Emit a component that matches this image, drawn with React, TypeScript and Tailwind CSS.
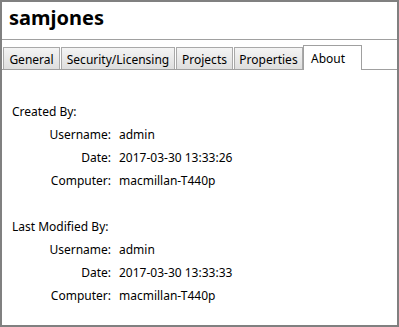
import React from "react";

const font = { fontFamily: '"Segoe UI", "Noto Sans", "Open Sans", sans-serif' };

function Row({ label, value }: { label: string; value: string }) {
  return (
    <div className="flex h-[23px] items-center">
      <div className="w-[99px] text-right">{label}</div>
      <div className="pl-[8px]">{value}</div>
    </div>
  );
}

export default function App() {
  const tabs = [
    { name: "General", w: "w-[57px]" },
    { name: "Security/Licensing", w: "w-[114px]" },
    { name: "Projects", w: "w-[57px]" },
    { name: "Properties", w: "w-[69px]" },
  ];
  return (
    <div
      className="w-[399px] h-[327px] border-2 border-[#808080] bg-white text-[12px] text-[#000] overflow-hidden"
      style={font}
    >
      <div className="h-[38px] border-b border-[#a0a0a0] flex items-center pl-[7px] pb-[6px]">
        <span className="text-[20px] font-bold leading-none">samjones</span>
      </div>
      <div className="mt-[5px] flex items-end h-[25px] border-b border-[#a0a0a0] pl-[1px]">
        {tabs.map((t) => (
          <div
            key={t.name}
            className={`${t.w} h-[22px] mr-[1px] border-t border-l border-r border-[#a9a9a9] bg-gradient-to-b from-[#f4f4f4] to-[#dedede] flex items-center justify-center leading-none pt-[3px]`}
          >
            {t.name}
          </div>
        ))}
        <div className="-ml-[1px] w-[59px] h-[25px] -mb-px border-t border-l border-r border-[#a0a0a0] bg-white flex items-start pl-[7px] pt-[7px] leading-none text-[12px]">
          About
        </div>
      </div>
      <div className="pl-[10px] pt-[30px]">
        <div className="h-[23px] flex items-center">Created By:</div>
        <Row label="Username:" value="admin" />
        <Row label="Date:" value="2017-03-30 13:33:26" />
        <Row label="Computer:" value="macmillan-T440p" />
        <div className="h-[23px] mt-[23px] flex items-center">Last Modified By:</div>
        <Row label="Username:" value="admin" />
        <Row label="Date:" value="2017-03-30 13:33:33" />
        <Row label="Computer:" value="macmillan-T440p" />
      </div>
    </div>
  );
}
